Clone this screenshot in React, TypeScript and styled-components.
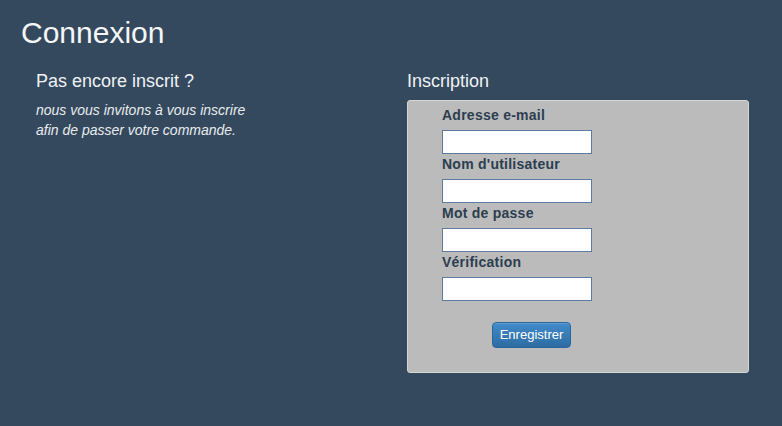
import React from "react";
import styled, { createGlobalStyle } from "styled-components";

const Global = createGlobalStyle`
  html, body {
    margin: 0;
    padding: 0;
    background: #34495e;
  }
  body {
    font-family: "Liberation Sans", Arial, sans-serif;
    font-size: 14px;
    line-height: 20px;
    color: #ecf0f1;
  }
`;

const Page = styled.div`
  width: 782px;
  height: 426px;
  box-sizing: border-box;
  padding: 16px 18px 0 21px;
  background: #34495e;
`;

const Title = styled.h1`
  margin: 0;
  font-size: 30px;
  line-height: 34px;
  font-weight: normal;
  color: #f4f6f7;
`;

const Columns = styled.div`
  display: grid;
  grid-template-columns: 371px 372px;
  margin-top: 21px;
`;

const Column = styled.div`
  padding: 0 15px;
`;

const Heading = styled.h2`
  margin: 0 0 9px;
  font-size: 18px;
  line-height: 20px;
  font-weight: normal;
  color: #eef2f5;
`;

const Intro = styled.p`
  margin: 0;
  font-style: italic;
  font-size: 14px;
  line-height: 20px;
  color: #e8ecef;
`;

const Panel = styled.form`
  box-sizing: border-box;
  width: 342px;
  height: 273px;
  margin: 0;
  padding: 4px 0 0 34px;
  background: #bbbbbb;
  border: 1px solid #d6d6d6;
  border-radius: 3px;
  display: flex;
  flex-direction: column;
`;

const Label = styled.label`
  display: block;
  margin-bottom: 5px;
  font-size: 14px;
  line-height: 20px;
  font-weight: bold;
  letter-spacing: 0.25px;
  color: #2c3e50;
`;

const Input = styled.input`
  display: block;
  box-sizing: border-box;
  width: 150px;
  height: 24px;
  margin: 0;
  padding: 2px 4px;
  background: #ffffff;
  border: 1px solid #5b7ba0;
  border-radius: 0;
  outline: none;
  font-family: "Liberation Sans", Arial, sans-serif;
  font-size: 13px;
`;

const ButtonRow = styled.div`
  margin-top: 21px;
  padding-left: 50px;
`;

const Button = styled.button`
  box-sizing: border-box;
  width: 79px;
  height: 26px;
  padding: 0;
  font-family: "Liberation Sans", Arial, sans-serif;
  font-size: 13px;
  line-height: 24px;
  color: #ffffff;
  background-image: linear-gradient(to bottom, #428bca 0%, #2d6ca2 100%);
  border: 1px solid #2b669a;
  border-radius: 4px;
  box-shadow: inset 0 1px 0 rgba(255, 255, 255, 0.15);
  cursor: pointer;
`;

const fields = [
  { id: "email", label: "Adresse e-mail", type: "email" },
  { id: "user", label: "Nom d'utilisateur", type: "text" },
  { id: "pass", label: "Mot de passe", type: "password" },
  { id: "verif", label: "Vérification", type: "password" },
];

export default function App() {
  return (
    <>
      <Global />
      <Page>
        <Title>Connexion</Title>
        <Columns>
          <Column>
            <Heading>Pas encore inscrit ?</Heading>
            <Intro>
              nous vous invitons à vous inscrire
              <br />
              afin de passer votre commande.
            </Intro>
          </Column>
          <Column>
            <Heading>Inscription</Heading>
            <Panel onSubmit={(e) => e.preventDefault()}>
              {fields.map((f) => (
                <div key={f.id}>
                  <Label htmlFor={f.id}>{f.label}</Label>
                  <Input id={f.id} type={f.type} />
                </div>
              ))}
              <ButtonRow>
                <Button type="submit">Enregistrer</Button>
              </ButtonRow>
            </Panel>
          </Column>
        </Columns>
      </Page>
    </>
  );
}
